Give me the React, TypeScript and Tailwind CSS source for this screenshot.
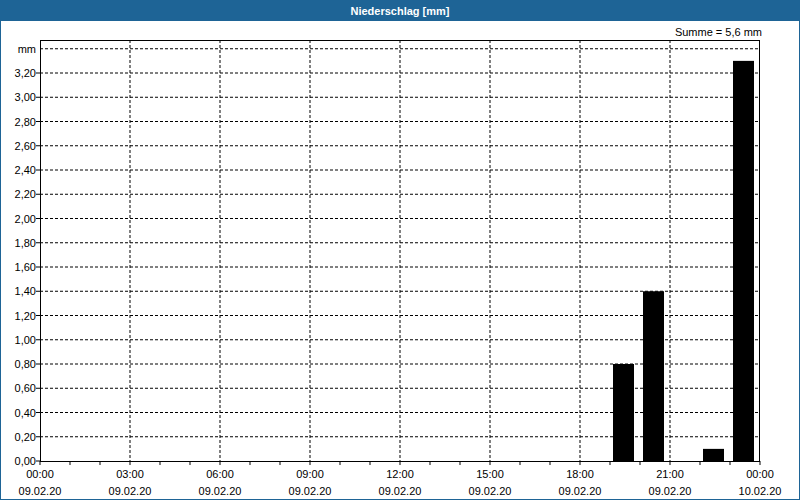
const L = 40;
const R = 760;
const B = 461;
const T = 40;
const step = 24.25;

const yLabels = Array.from({ length: 17 }, (_, k) => k);
const hours = Array.from({ length: 9 }, (_, i) => i * 3);
const bars = [
  { h: 19, v: 0.8 },
  { h: 20, v: 1.4 },
  { h: 22, v: 0.1 },
  { h: 23, v: 3.3 },
];

export default function App() {
  const font = { fontFamily: '"Liberation Sans", Arial, sans-serif' };
  return (
    <div className="w-[800px] h-[500px] bg-white border border-[#1e6496] flex flex-col" style={font}>
      <div className="h-[20px] bg-[#1e6496] text-white text-[11px] font-bold flex items-center justify-center shrink-0">
        Niederschlag [mm]
      </div>
      <svg width="798" height="478" viewBox="1 21 798 478" className="block">
        <text x="762" y="36" fontSize="11" textAnchor="end" fill="#000">Summe = 5,6 mm</text>
        {yLabels.map((k) => {
          const y = B - k * step;
          return (
            <g key={k}>
              {k > 0 && <line x1={L} x2={R} y1={y} y2={y} stroke="#000" strokeDasharray="3 2" />}
              <line x1={L - 4} x2={L} y1={y} y2={y} stroke="#000" />
              <text x={L - 4} y={y + 4} fontSize="11" textAnchor="end">{(k * 0.2).toFixed(2).replace(".", ",")}</text>
            </g>
          );
        })}
        <line x1={L} x2={R} y1={B - 17 * step} y2={B - 17 * step} stroke="#000" strokeDasharray="3 2" />
        <text x={L - 4} y={B - 17 * step + 4} fontSize="11" textAnchor="end">mm</text>
        {hours.map((h, i) => {
          const x = L + h * 30;
          return (
            <g key={h}>
              {i > 0 && i < 8 && <line x1={x} x2={x} y1={T} y2={B} stroke="#000" strokeDasharray="3 2" />}
              <text x={x} y={B + 17} fontSize="11" textAnchor="middle">{i === 8 ? "00:00" : `${String(h).padStart(2, "0")}:00`}</text>
              <text x={x} y={B + 34} fontSize="11" textAnchor="middle">{i === 8 ? "10.02.20" : "09.02.20"}</text>
            </g>
          );
        })}
        {Array.from({ length: 25 }, (_, h) => (
          <line key={h} x1={L + h * 30} x2={L + h * 30} y1={B} y2={B + 4} stroke="#000" />
        ))}
        {bars.map((b) => {
          const hgt = (b.v / 0.2) * step;
          return <rect key={b.h} x={L + b.h * 30 + 3} y={B - hgt} width="21" height={hgt} fill="#000" />;
        })}
        <rect x={L + 0.5} y={T + 0.5} width={R - L - 1} height={B - T} fill="none" stroke="#000" />
      </svg>
    </div>
  );
}
